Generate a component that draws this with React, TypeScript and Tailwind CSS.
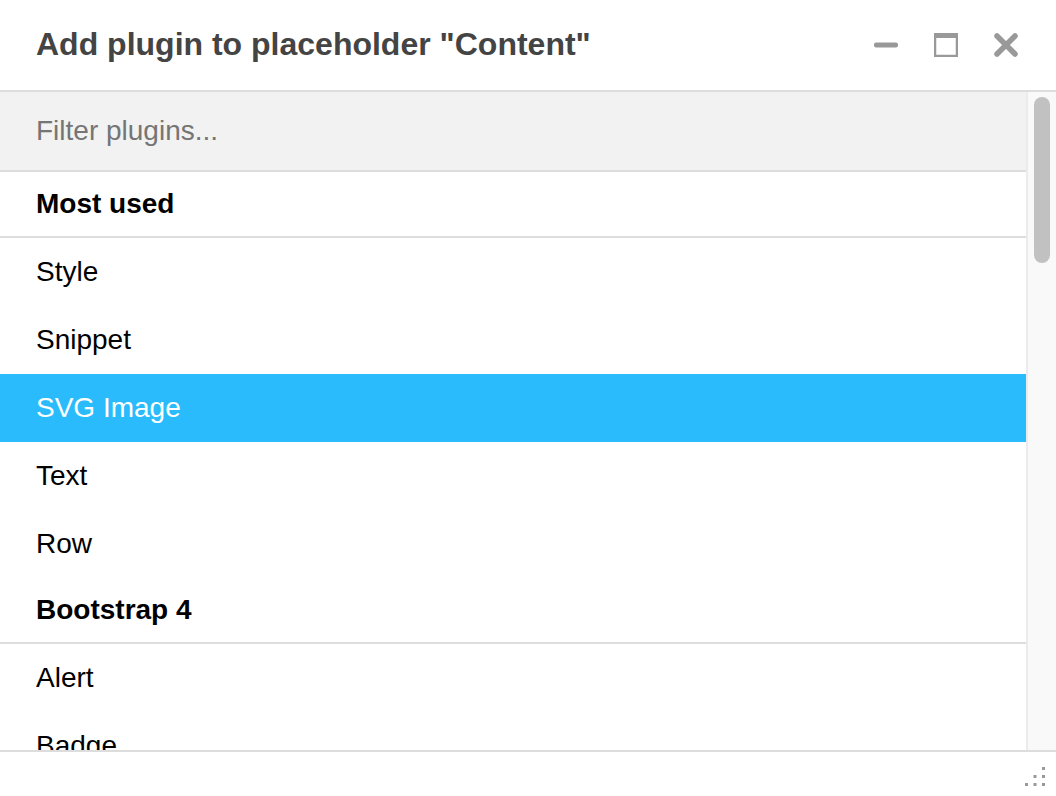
import React from "react";

const font = { fontFamily: '"Liberation Sans", Arial, Helvetica, sans-serif' };

function Row({ label, active }: { label: string; active?: boolean }) {
  return (
    <div
      className={
        "h-[68px] shrink-0 flex items-center pl-[36px] text-[28px] " +
        (active ? "bg-[#29bbfb] text-white" : "text-black")
      }
    >
      {label}
    </div>
  );
}

function Section({ label }: { label: string }) {
  return (
    <div className="h-[66px] shrink-0 flex items-center pl-[36px] text-[28px] font-bold text-black border-b-2 border-[#dddddd]">
      {label}
    </div>
  );
}

export default function App() {
  return (
    <div className="w-[1056px] h-[796px] bg-white flex flex-col overflow-hidden" style={font}>
      <div className="h-[92px] shrink-0 flex items-center justify-between pl-[36px] pr-[38px] border-b-2 border-[#dddddd]">
        <h1 className="text-[32px] font-bold text-[#444444] pb-[2px]">Add plugin to placeholder "Content"</h1>
        <div className="flex items-center gap-[36px]">
          <svg width="24" height="24" viewBox="0 0 24 24">
            <rect x="0" y="9.5" width="24" height="5" rx="2" fill="#999" />
          </svg>
          <svg width="24" height="24" viewBox="0 0 24 24">
            <rect x="1" y="1" width="22" height="22" fill="none" stroke="#999" strokeWidth="2.5" />
            <rect x="0" y="0" width="24" height="5" fill="#999" />
          </svg>
          <svg width="24" height="24" viewBox="0 0 24 24">
            <path d="M3 3 L21 21 M21 3 L3 21" stroke="#999" strokeWidth="5.5" strokeLinecap="round" />
          </svg>
        </div>
      </div>
      <div className="flex-1 flex min-h-0">
        <div className="flex-1 flex flex-col overflow-hidden">
          <div className="h-[80px] shrink-0 bg-[#f2f2f2] border-b-2 border-[#dddddd] flex items-center pl-[36px]">
            <span className="text-[28px] text-[#757575]">Filter plugins...</span>
          </div>
          <Section label="Most used" />
          <Row label="Style" />
          <Row label="Snippet" />
          <Row label="SVG Image" active />
          <Row label="Text" />
          <Row label="Row" />
          <Section label="Bootstrap 4" />
          <Row label="Alert" />
          <Row label="Badge" />
        </div>
        <div className="w-[30px] shrink-0 bg-[#f9f9f9] border-l-2 border-[#ebebeb] pl-[6px] pt-[5px]">
          <div className="w-[16px] h-[166px] rounded-full bg-[#c1c1c1]" />
        </div>
      </div>
      <div className="h-[46px] shrink-0 border-t-2 border-[#dddddd] flex justify-end items-end pr-[11px] pb-[10px]">
        <svg width="20" height="20" viewBox="0 0 20 20">
          <rect x="17" y="1" width="3" height="3" fill="#999" />
          <rect x="8.5" y="9" width="3" height="3" fill="#999" />
          <rect x="17" y="9" width="3" height="3" fill="#999" />
          <rect x="0" y="17" width="3" height="3" fill="#999" />
          <rect x="8.5" y="17" width="3" height="3" fill="#999" />
          <rect x="17" y="17" width="3" height="3" fill="#999" />
        </svg>
      </div>
    </div>
  );
}
